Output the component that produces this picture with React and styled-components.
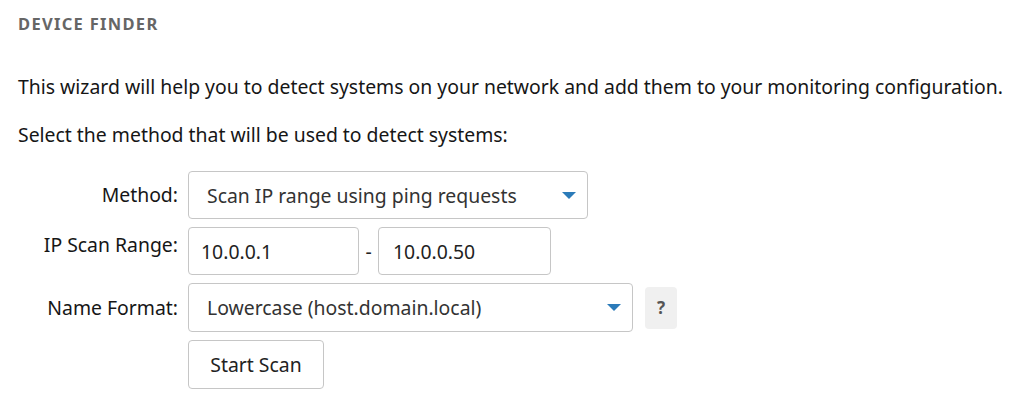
import React from "react";
import styled, { createGlobalStyle } from "styled-components";

const Global = createGlobalStyle`
  html, body { margin: 0; padding: 0; background: #fff; }
  body { font-family: "Noto Sans", "Open Sans", sans-serif; color: #161616; }
  * { box-sizing: border-box; }
`;

const Page = styled.div`
  padding: 14px 18px 0 18px;
`;

const Title = styled.h1`
  margin: 0;
  font-size: 16.5px;
  line-height: 20px;
  font-weight: 700;
  letter-spacing: 1.3px;
  color: #666;
  text-transform: uppercase;
`;

const Para = styled.p`
  margin: ${(p) => p.$top || 0}px 0 0 0;
  font-size: 19.4px;
  line-height: 26px;
  color: #161616;
`;

const Form = styled.div`
  display: grid;
  grid-template-columns: 160px auto;
  column-gap: 10px;
  row-gap: 8px;
  margin-top: 23px;
  justify-content: start;
`;

const Label = styled.label`
  font-size: 19.4px;
  line-height: 26px;
  text-align: right;
  color: #161616;
  white-space: nowrap;
  align-self: ${(p) => (p.$top ? "start" : "center")};
  padding-top: ${(p) => (p.$top ? "5px" : "0")};
`;

const Controls = styled.div`
  display: flex;
  align-items: center;
`;

const Select = styled.div`
  width: ${(p) => p.$w}px;
  height: ${(p) => p.$h || 48}px;
  border: 1px solid #c6c6c6;
  border-radius: 4px;
  display: flex;
  align-items: center;
  justify-content: space-between;
  padding: 0 10px 0 18px;
  font-size: 19.4px;
  color: #333;
  background: #fff;
`;

const Arrow = styled.span`
  width: 0;
  height: 0;
  border-left: 7px solid transparent;
  border-right: 7px solid transparent;
  border-top: 7px solid #2b7bb9;
  margin-right: 1px;
`;

const Input = styled.div`
  width: ${(p) => p.$w}px;
  height: 48px;
  border: 1px solid #c6c6c6;
  border-radius: 4px;
  display: flex;
  align-items: center;
  padding-left: ${(p) => p.$pl || 12}px;
  font-size: 19.4px;
  color: #222;
  background: #fff;
`;

const Dash = styled.span`
  font-size: 19.4px;
  color: #222;
  width: 19px;
  text-align: center;
`;

const Help = styled.button`
  width: 32px;
  height: 42px;
  margin-left: 12px;
  border: none;
  border-radius: 4px;
  background: #f0f0f0;
  color: #555;
  font-family: inherit;
  font-weight: 700;
  font-size: 17px;
  padding: 0;
`;

const Button = styled.button`
  width: 136px;
  height: 49px;
  border: 1px solid #c6c6c6;
  border-radius: 4px;
  background: #fff;
  font-family: inherit;
  font-size: 19.4px;
  color: #222;
  padding: 0;
`;

export default function App() {
  return (
    <>
      <Global />
      <Page>
        <Title>Device Finder</Title>
        <Para $top={40}>
          This wizard will help you to detect systems on your network and add
          them to your monitoring configuration.
        </Para>
        <Para $top={22}>Select the method that will be used to detect systems:</Para>
        <Form>
          <Label>Method:</Label>
          <Controls>
            <Select $w={400}>
              Scan IP range using ping requests
              <Arrow />
            </Select>
          </Controls>
          <Label $top>IP Scan Range:</Label>
          <Controls>
            <Input $w={171}>10.0.0.1</Input>
            <Dash>-</Dash>
            <Input $w={173} $pl={14}>10.0.0.50</Input>
          </Controls>
          <Label>Name Format:</Label>
          <Controls>
            <Select $w={445} $h={49}>
              Lowercase (host.domain.local)
              <Arrow />
            </Select>
            <Help>?</Help>
          </Controls>
          <span />
          <Controls>
            <Button>Start Scan</Button>
          </Controls>
        </Form>
      </Page>
    </>
  );
}
